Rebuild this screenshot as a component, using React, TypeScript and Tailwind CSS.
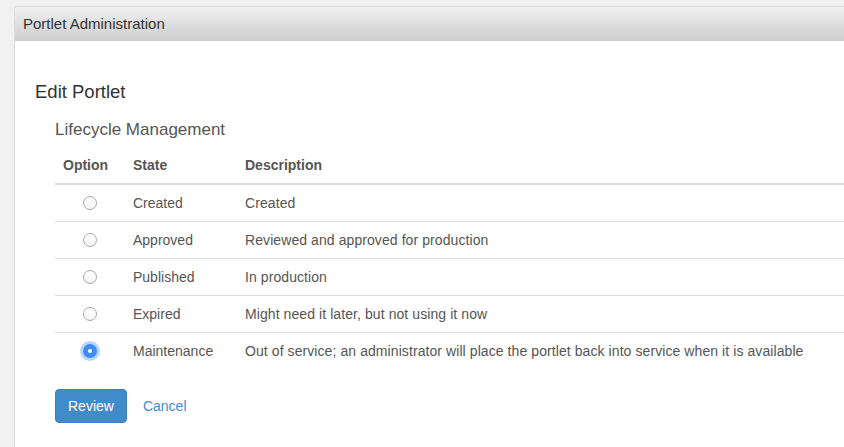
import { useState } from 'react'

const rows = [
  { state: 'Created', desc: 'Created' },
  { state: 'Approved', desc: 'Reviewed and approved for production' },
  { state: 'Published', desc: 'In production' },
  { state: 'Expired', desc: 'Might need it later, but not using it now' },
  { state: 'Maintenance', desc: 'Out of service; an administrator will place the portlet back into service when it is available' },
]

function Radio({ checked, onClick }: { checked: boolean; onClick: () => void }) {
  if (checked) {
    return (
      <span
        onClick={onClick}
        className="inline-flex items-center justify-center w-[14px] h-[14px] rounded-full bg-[#3b8cf5] shadow-[0_0_0_3px_rgba(100,160,245,0.45)] cursor-pointer"
      >
        <span className="w-[4px] h-[4px] rounded-full bg-white" />
      </span>
    )
  }
  return (
    <span
      onClick={onClick}
      className="inline-block w-[14px] h-[14px] rounded-full border border-[#a9a9a9] bg-gradient-to-b from-white to-[#f4f4f4] cursor-pointer"
    />
  )
}

export default function App() {
  const [selected, setSelected] = useState(4)

  return (
    <div
      className="w-[844px] h-[447px] overflow-hidden bg-[#f1f1f1] pl-[14px] pt-[6px]"
      style={{ fontFamily: '"Liberation Sans", Arial, sans-serif' }}
    >
      <div className="h-full bg-white border-l border-t border-[#dcdcdc] rounded-tl-[3px] flex flex-col">
        {/* Panel header */}
        <div className="h-[34px] shrink-0 flex items-center px-[8px] bg-gradient-to-b from-[#f0f0f0] to-[#cdcdcd] text-[15px] text-[#333] rounded-tl-[3px]">
          Portlet Administration
        </div>

        <div className="pl-[20px] pt-[40px]">
          <h2 className="text-[18.5px] leading-[22px] text-[#333]">Edit Portlet</h2>

          <div className="pl-[20px] pt-[16px]">
            <h3 className="text-[17px] leading-[22px] text-[#555]">Lifecycle Management</h3>

            <table className="mt-[6px] w-full border-collapse text-[14px] text-[#555]">
              <thead>
                <tr className="border-b-2 border-[#dddddd]">
                  <th className="w-[70px] text-left font-bold px-[8px] py-[8px] leading-[20px]">Option</th>
                  <th className="w-[112px] text-left font-bold px-[8px] py-[8px] leading-[20px]">State</th>
                  <th className="text-left font-bold px-[8px] py-[8px] leading-[20px]">Description</th>
                </tr>
              </thead>
              <tbody>
                {rows.map((r, i) => (
                  <tr key={r.state} className={i < rows.length - 1 ? 'border-b border-[#dddddd]' : ''}>
                    <td className="px-[8px] py-[8px] leading-[20px] text-center">
                      <div className="flex items-center justify-center h-[20px]">
                        <Radio checked={selected === i} onClick={() => setSelected(i)} />
                      </div>
                    </td>
                    <td className="px-[8px] py-[8px] leading-[20px] whitespace-nowrap">{r.state}</td>
                    <td className="px-[8px] py-[8px] leading-[20px] whitespace-nowrap tracking-[0.08px]">{r.desc}</td>
                  </tr>
                ))}
              </tbody>
            </table>

            <div className="flex items-center mt-[20px] gap-[16px]">
              <button className="h-[34px] px-[12px] rounded-[4px] bg-[#428bca] border border-[#3a7fc0] text-white text-[14px]">
                Review
              </button>
              <a href="#" className="text-[14px] text-[#428bca]">Cancel</a>
            </div>
          </div>
        </div>
      </div>
    </div>
  )
}
